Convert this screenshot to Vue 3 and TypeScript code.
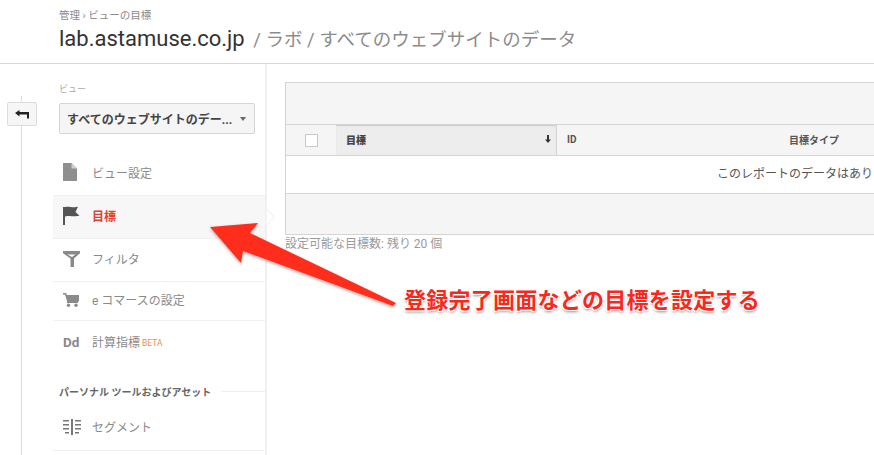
<script setup lang="ts">
const topItems = [
  { label: 'ビュー設定', icon: 'doc', h: 44 },
  { label: '目標', icon: 'flag', h: 43, active: true },
  { label: 'フィルタ', icon: 'filter', h: 43 },
  { label: 'e コマースの設定', icon: 'cart', h: 39 },
]
</script>

<template>
  <div class="page">
    <header class="header">
      <div class="crumbs">管理 › ビューの目標</div>
      <div class="title"><span class="site">lab.astamuse.co.jp</span><span class="path"> / ラボ / すべてのウェブサイトのデータ</span></div>
    </header>
    <div class="body">
      <div class="rail">
        <div class="rail-line"></div>
        <button class="back" type="button">
          <svg width="14" height="9" viewBox="0 0 14 9"><path d="M0 3 4.500 0v2H14v6.500h-2V4.500H4.500v2z" fill="#222"/></svg>
        </button>
      </div>
      <aside class="side">
        <div class="view-label">ビュー</div>
        <div class="select"><span>すべてのウェブサイトのデー...</span><i class="caret"></i></div>
        <nav class="nav">
          <div v-for="item in topItems" :key="item.label" class="row" :class="{ active: item.active }" :style="{ height: item.h + 'px' }">
            <span class="ico">
              <svg v-if="item.icon === 'doc'" width="14" height="18" viewBox="0 0 14 18"><path d="M0 0h8.500L14 5.500V18H0z" fill="#8f8f8f"/><path d="M8.500 0v5.500H14z" fill="#d0d0d0"/></svg>
              <svg v-else-if="item.icon === 'flag'" width="18" height="19" viewBox="0 0 18 19"><path d="M0 1h2v18H0z" fill="#555"/><path d="M2 1c4-1.200 7 1 13-.2l-2.500 5.200 4 3.800C11 11 7 9 2 10.500z" fill="#555"/></svg>
              <svg v-else-if="item.icon === 'filter'" width="18" height="16" viewBox="0 0 18 16"><path d="M0 0h17v2.200L11 7.500v8.500H7.500V7.500L0 2.200z" fill="#8a8a8a"/><path d="M4.500 3.500h8L9 6z" fill="#fff"/></svg>
              <svg v-else width="16" height="14" viewBox="0 0 16 14"><path d="M0 0h3l1 2h12v6.500H4.200L2 1.500H0z" fill="#8a8a8a"/><rect x="4" y="8" width="11" height="2" fill="#8a8a8a"/><circle cx="5.500" cy="12.300" r="1.700" fill="#8a8a8a"/><circle cx="13" cy="12.300" r="1.700" fill="#8a8a8a"/></svg>
            </span>
            <span class="lab">{{ item.label }}</span>
            <svg v-if="item.active" class="notch" width="8" height="18" viewBox="0 0 8 18"><path d="M0 0 8 9 0 18z" fill="#fff" stroke="#ececec"/></svg>
          </div>
          <div class="row calc">
            <span class="ico dd">Dd</span>
            <span class="lab">計算指標</span><span class="beta">BETA</span>
          </div>
        </nav>
        <div class="section"><span>パーソナル ツールおよびアセット</span></div>
        <div class="row seg">
          <span class="ico">
            <svg width="18" height="16" viewBox="0 0 18 16" fill="#777"><rect x="8" y="0" width="2" height="16"/><rect x="0" y="1" width="6" height="1.500"/><rect x="0" y="5" width="6" height="1.500"/><rect x="0" y="9" width="6" height="1.500"/><rect x="2" y="13" width="4" height="1.500"/><rect x="12" y="1" width="6" height="1.500"/><rect x="12" y="5" width="6" height="1.500"/><rect x="12" y="9" width="6" height="1.500"/><rect x="12" y="13" width="4" height="1.500"/></svg>
          </span>
          <span class="lab">セグメント</span>
        </div>
      </aside>
      <main class="main">
        <div class="table">
          <div class="band"></div>
          <div class="thead">
            <div class="c-check"><span class="box"></span></div>
            <div class="c-goal"><b>目標</b><svg width="6" height="8" viewBox="0 0 6 8"><path d="M2 0h2v4.500h2L3 8 0 4.500h2z" fill="#333"/></svg></div>
            <div class="c-id">ID</div>
            <div class="c-type">目標タイプ</div>
          </div>
          <div class="empty">このレポートのデータはあり</div>
          <div class="band foot"></div>
        </div>
        <p class="note">設定可能な目標数: 残り 20 個</p>
      </main>
    </div>
    <svg class="arrow" width="874" height="455" viewBox="0 0 874 455">
      <defs>
        <filter id="sh" x="-10%" y="-10%" width="120%" height="130%"><feDropShadow dx="0" dy="1.500" stdDeviation="1.500" flood-color="#000" flood-opacity=".35"/></filter>
      </defs>
      <polygon points="210,227 258,223 250,233 396,303 393,306 243,251 241,263" fill="#ff2d1e" filter="url(#sh)"/>
    </svg>
    <div class="callout">登録完了画面などの目標を設定する</div>
  </div>
</template>

<style scoped>
.page { position: relative; width: 874px; height: 455px; overflow: hidden; background: #fff; font-family: Roboto, "Noto Sans CJK JP", sans-serif; color: #333; }
.header { height: 64px; box-sizing: border-box; border-bottom: 1px solid #d6d6d6; padding: 9px 0 0 59px; }
.crumbs { font-size: 10.500px; line-height: 13px; color: #8a8a8a; }
.title { margin-top: 2px; line-height: 30px; white-space: nowrap; }
.site { font-size: 22px; color: #333; }
.path { margin-left: 4px; font-size: 18.500px; color: #8c8c8c; }
.body { display: flex; height: 391px; }
.rail { position: relative; width: 53px; flex: none; }
.rail-line { position: absolute; left: 21px; top: 32px; bottom: 0; width: 1px; background: #dcdcdc; }
.back { position: absolute; left: 7px; top: 38px; width: 30px; height: 24px; padding: 0; display: flex; align-items: center; justify-content: center; background: #f6f6f6; border: 1px solid #dcdcdc; border-radius: 2px; }
.side { width: 214px; flex: none; box-sizing: border-box; border-right: 2px solid #f0f0f0; }
.view-label { margin: 19px 0 0 6px; font-size: 9px; line-height: 12px; color: #aaa; }
.select { margin: 8px 0 0 6px; width: 196px; height: 31px; box-sizing: border-box; padding: 0 8px 0 7px; display: flex; align-items: center; justify-content: space-between; background: #f5f5f5; border: 1px solid #d4d4d4; border-radius: 2px; font-size: 12px; font-weight: 700; color: #444; white-space: nowrap; }
.caret { width: 0; height: 0; border: 3px solid transparent; border-top: 4px solid #666; border-bottom: 0; }
.nav { margin-top: 18px; }
.row { position: relative; display: flex; align-items: center; box-sizing: border-box; border-bottom: 1px solid #f0f0f0; padding-bottom: 3px; }
.row.active { background: #f7f7f7; }
.ico { width: 39px; padding-left: 10px; box-sizing: border-box; flex: none; display: flex; align-items: center; }
.lab { font-size: 12px; color: #8a8a8a; white-space: nowrap; }
.row.active .lab { color: #e0412f; font-weight: 700; }
.notch { position: absolute; right: -9px; top: 12px; }
.calc { height: 44px; border-bottom: 0; }
.dd { font-size: 13.500px; font-weight: 700; color: #888; }
.beta { margin: 2px 0 0 2px; font-size: 8.500px; color: #ef8d4a; }
.section { margin: 19px 0 0 6px; display: flex; align-items: center; gap: 10px; font-size: 10px; font-weight: 700; color: #666; white-space: nowrap; }
.section::after { content: ""; flex: 1; height: 1px; background: #eee; }
.seg { height: 45px; margin-top: 7px; }
.main { flex: 1; min-width: 0; padding: 18px 0 0 18px; }
.table { width: 640px; border: 1px solid #d4d4d4; border-width: 1px 0 1px 1px; }
.band { height: 41px; background: #f5f5f5; border-bottom: 1px solid #d4d4d4; }
.band.foot { height: 40px; border-bottom: 0; }
.thead { height: 30px; display: flex; background: #f5f5f5; border-bottom: 1px solid #d4d4d4; font-size: 10px; font-weight: 700; color: #555; align-items: stretch; }
.c-check { width: 50px; display: flex; align-items: center; justify-content: center; }
.box { width: 11px; height: 11px; background: #fff; border: 1px solid #c8c8c8; }
.c-goal { width: 221px; box-sizing: border-box; padding: 0 5px 2px 10px; display: flex; align-items: center; justify-content: space-between; background: #ededed; border-right: 1px solid #d4d4d4; box-shadow: inset 0 1px 1px #ccc; }
.c-goal b { color: #444; }
.c-id { width: 232px; padding: 0 0 2px 10px; box-sizing: border-box; display: flex; align-items: center; }
.c-type { padding-bottom: 2px; display: flex; align-items: center; }
.empty { height: 38px; box-sizing: border-box; border-bottom: 1px solid #d4d4d4; background: #fff; padding-left: 431px; font-size: 12px; line-height: 36px; color: #555; white-space: nowrap; }
.note { margin: 2px 0 0; font-size: 12px; line-height: 15px; color: #9a9a9a; }
.arrow { position: absolute; left: 0; top: 0; pointer-events: none; }
.callout { position: absolute; left: 404px; top: 289px; font-size: 22px; letter-spacing: .25px; line-height: 24px; font-weight: 700; color: #f9271c; white-space: nowrap; text-shadow: -1px -1px 0 #fff, 1px -1px 0 #fff, -1px 1px 0 #fff, 1px 1px 0 #fff, 0 2px 3px rgba(0,0,0,.45); }
</style>
